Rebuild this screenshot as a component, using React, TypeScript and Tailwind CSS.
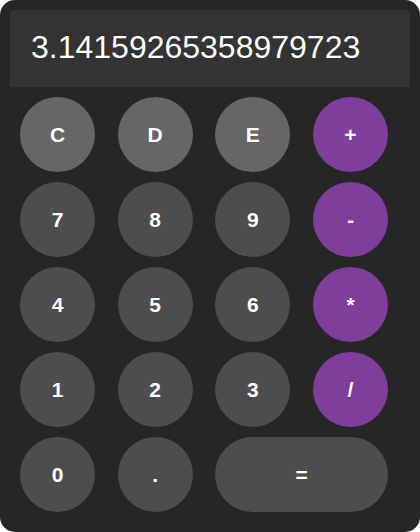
import React from "react";

type Btn = { label: string; kind: "fn" | "num" | "op"; wide?: boolean };

const buttons: Btn[] = [
  { label: "C", kind: "fn" },
  { label: "D", kind: "fn" },
  { label: "E", kind: "fn" },
  { label: "+", kind: "op" },
  { label: "7", kind: "num" },
  { label: "8", kind: "num" },
  { label: "9", kind: "num" },
  { label: "-", kind: "op" },
  { label: "4", kind: "num" },
  { label: "5", kind: "num" },
  { label: "6", kind: "num" },
  { label: "*", kind: "op" },
  { label: "1", kind: "num" },
  { label: "2", kind: "num" },
  { label: "3", kind: "num" },
  { label: "/", kind: "op" },
  { label: "0", kind: "num" },
  { label: ".", kind: "num" },
  { label: "=", kind: "num", wide: true },
];

export default function App() {
  return (
    <div className="w-[420px] h-[532px] bg-white">
      <div
        className="w-[420px] h-[532px] bg-[#262626] rounded-[15px] p-[10px]"
        style={{ fontFamily: '"Liberation Sans", Arial, sans-serif' }}
      >
        <div className="h-[77px] bg-[#333333] rounded-t-[5px] px-[21px] pt-[19px]">
          <div className="text-white text-[32px] leading-[36px]">3.14159265358979723</div>
        </div>
        <div className="mt-[10px] ml-[10px] w-[368px] grid grid-cols-4 gap-x-[22.67px] gap-y-[10px]">
          {buttons.map((b) => (
            <button
              key={b.label}
              className={
                "h-[75px] rounded-full flex items-center justify-center text-white text-[21px] font-bold " +
                (b.wide ? "col-span-2 " : "w-[75px] ") +
                (b.kind === "fn"
                  ? "bg-[#666666]"
                  : b.kind === "op"
                  ? "bg-[#7f3d9c]"
                  : "bg-[#4d4d4d]")
              }
            >
              {b.label}
            </button>
          ))}
        </div>
      </div>
    </div>
  );
}
